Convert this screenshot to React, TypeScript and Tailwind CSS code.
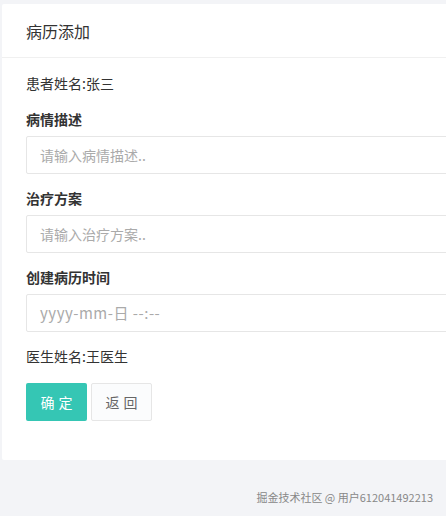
import React from "react";

export default function App() {
  const font = { fontFamily: '"Noto Sans CJK SC", "Noto Sans", sans-serif' };
  return (
    <div className="w-[446px] h-[516px] bg-[#f3f4f7] pt-[4px] pl-[2px] overflow-hidden relative" style={font}>
      <div className="bg-white w-[460px] h-[456px] rounded-[2px]">
        <div className="h-[54px] flex items-center pl-[24px] border-b border-[#f0f0f0] text-[16px] text-[#333]">
          病历添加
        </div>
        <div className="pl-[24px] pt-[15px] flex flex-col text-[14px] text-[#333]">
          <div className="h-[20px] leading-[20px]">患者姓名:张三</div>
          <div className="h-[20px] leading-[20px] mt-[16px] font-semibold">病情描述</div>
          <div className="mt-[7px] h-[38px] border border-[#e6e6e6] rounded-[2px] flex items-center pl-[13px] text-[#aaa]">
            请输入病情描述..
          </div>
          <div className="h-[20px] leading-[20px] mt-[14px] font-semibold">治疗方案</div>
          <div className="mt-[7px] h-[38px] border border-[#e6e6e6] rounded-[2px] flex items-center pl-[13px] text-[#aaa]">
            请输入治疗方案..
          </div>
          <div className="h-[20px] leading-[20px] mt-[14px] font-semibold">创建病历时间</div>
          <div className="mt-[7px] h-[38px] border border-[#e6e6e6] rounded-[2px] flex items-center pl-[13px] text-[#aaa] text-[15px] tracking-[0.5px]">
            yyyy-mm-日 --:--
          </div>
          <div className="h-[20px] leading-[20px] mt-[14px]">医生姓名:王医生</div>
          <div className="mt-[17px] flex gap-[4px]">
            <div className="w-[61px] h-[38px] bg-[#35c6b4] rounded-[2px] text-white flex items-center justify-center tracking-[4px] pl-[4px]">
              确定
            </div>
            <div className="w-[61px] h-[38px] bg-[#fbfcfd] border border-[#e6e6e6] rounded-[2px] text-[#666] flex items-center justify-center tracking-[4px] pl-[4px]">
              返回
            </div>
          </div>
        </div>
      </div>
      <div className="absolute right-[13px] top-[489px] text-[11px] text-[#888]">
        掘金技术社区 @ 用户612041492213
      </div>
    </div>
  );
}
